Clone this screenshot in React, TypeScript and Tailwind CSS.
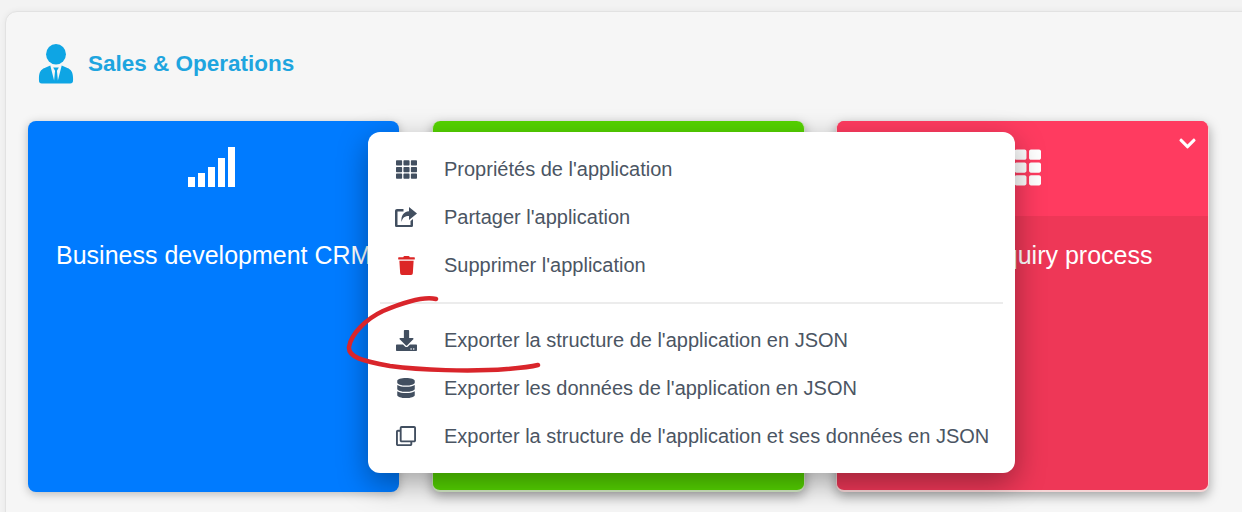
import React from 'react';
import {FaChevronDown, FaDatabase, FaDownload, FaRegClone, FaTh, FaTrash} from 'react-icons/fa';

function ShareIcon() {
    return (
        <svg width="24" height="22" viewBox="0 0 24 22" className="text-[#424f60]" fill="currentColor">
            <path d="M3 3h6.500v2.500H3.500v13.500h13v-4l2.500-2v6.500c0 1-.8 1.500-1.500 1.500h-15C1.800 21 1 20.500 1 19.500V5c0-1.200.8-2 2-2z" />
            <path d="M15 1l8 6.500-8 6.500v-4c-4 0-6.500 1.500-7.500 6-.7-6 2-10.500 7.500-10.800z" />
        </svg>
    );
}

function SignalIcon() {
    return (
        <svg width="48" height="40" viewBox="0 0 48 40" fill="currentColor">
            <rect x="0" y="30" width="7" height="10" />
            <rect x="10" y="26" width="7" height="14" />
            <rect x="20" y="20" width="7" height="20" />
            <rect x="30" y="11" width="7" height="29" />
            <rect x="40" y="0" width="7" height="40" />
        </svg>
    );
}

const topItems = [
    {label: "Propriétés de l'application", icon: <FaTh className="text-[21px] text-[#424f60]" />},
    {label: "Partager l'application", icon: <ShareIcon />},
    {label: "Supprimer l'application", icon: <FaTrash className="text-[19px] text-[#dc2626]" />},
];

const exportItems = [
    {label: "Exporter la structure de l'application en JSON", icon: <FaDownload className="text-[21px] text-[#424f60]" />},
    {label: "Exporter les données de l'application en JSON", icon: <FaDatabase className="text-[20px] text-[#424f60]" />},
    {label: "Exporter la structure de l'application et ses données en JSON", icon: <FaRegClone className="text-[20px] text-[#424f60]" />},
];

function MenuRow({label, icon}: {label: string; icon: React.ReactNode}) {
    return (
        <div className="flex h-12 items-center">
            <div className="flex w-[76px] justify-center">{icon}</div>
            <span className="whitespace-nowrap text-[20px] text-[#4b5563]">{label}</span>
        </div>
    );
}

function UserIcon() {
    return (
        <svg width="36" height="40" viewBox="0 1 38 41" preserveAspectRatio="none" className="text-[#0ea5e4]" fill="currentColor">
            <circle cx="19" cy="11.500" r="10.500" />
            <path d="M1 36c0-6 2-9 6-10.500l6-2.500 4 15.500 1-10-2-3.500h6l-2 3.500 1 10 4-15.500 6 2.500c4 1.500 6 4.500 6 10.500v2.500c0 2-1 3-3 3h-30c-2 0-3-1-3-3z" />
        </svg>
    );
}

export default function App() {
    return (
        <div className="relative h-[512px] w-[1242px] overflow-hidden bg-[#f3f3f3] pl-[5px] pt-[11px] font-['Liberation_Sans',sans-serif]">
            <div className="h-[520px] w-[1300px] rounded-tl-xl border border-[#e2e2e2] bg-[#f6f6f6] pl-[22px] shadow-[0_0_6px_rgba(0,0,0,0.06)]">
                <div className="flex h-[109px] items-start gap-[14px] pl-[10px] pt-[32px]">
                    <UserIcon />
                    <h2 className="mt-[4px] text-[22.500px] leading-[32px] font-bold text-[#1ea5df]">Sales &amp; Operations</h2>
                </div>

                <div className="flex items-start">
                    {/* --- BLUE CARD --- */}
                    <div className="h-[371px] w-[371px] overflow-hidden rounded-lg bg-[#007bff] shadow-[0_2px_10px_rgba(0,0,0,0.25)]">
                        <div className="flex h-[95px] justify-center pr-[3px] pt-[26px] text-white">
                            <SignalIcon />
                        </div>
                        <p className="pl-[28px] pt-[23px] text-[25px] leading-[32px] whitespace-nowrap text-white">Business development CRM</p>
                    </div>

                    {/* --- GREEN CARD --- */}
                    <div className="ml-[33px] h-[371px] w-[373px] overflow-hidden rounded-lg border-x border-b-2 border-[#d3e9c4] bg-[#55d400] shadow-[0_4px_12px_rgba(0,0,0,0.35)]" />

                    {/* --- RED CARD --- */}
                    <div className="relative ml-[31px] h-[371px] w-[373px] overflow-hidden rounded-lg border-x border-b-2 border-[#f6d5d6] bg-[#ee3757] shadow-[0_4px_12px_rgba(0,0,0,0.35)]">
                        <div className="flex h-[95px] justify-center bg-[#ff3b60] pr-[4px] pt-[26px] text-white">
                            <FaTh className="text-[41px]" />
                        </div>
                        <FaChevronDown className="absolute right-[11px] top-[13px] text-[19px] text-white" />
                        <p className="pl-[32px] pt-[23px] text-[25px] leading-[32px] whitespace-nowrap text-white">Customer inquiry process</p>
                    </div>
                </div>
            </div>

            {/* --- CONTEXT MENU --- */}
            <div className="absolute left-[368px] top-[132px] h-[341px] w-[647px] rounded-xl bg-white pt-[13px] shadow-[0_10px_30px_rgba(0,0,0,0.35)]">
                {topItems.map(item => <MenuRow key={item.label} {...item} />)}
                <div className="mx-[12px] mt-[13px] mb-[12px] h-[2px] bg-[#ececec]" />
                {exportItems.map(item => <MenuRow key={item.label} {...item} />)}
            </div>

            {/* --- RED PEN ANNOTATION --- */}
            <svg className="absolute left-0 top-0" width="1242" height="512" fill="none">
                <path
                    d="M436 299C424 296 402 303 383 311C366 319 351 334 349 347C348 357 362 361 390 366C420 370 470 372 507 369C520 368 530 367 538 365"
                    stroke="#d9252b"
                    strokeWidth="4.500"
                    strokeLinecap="round"
                />
            </svg>
        </div>
    );
}
